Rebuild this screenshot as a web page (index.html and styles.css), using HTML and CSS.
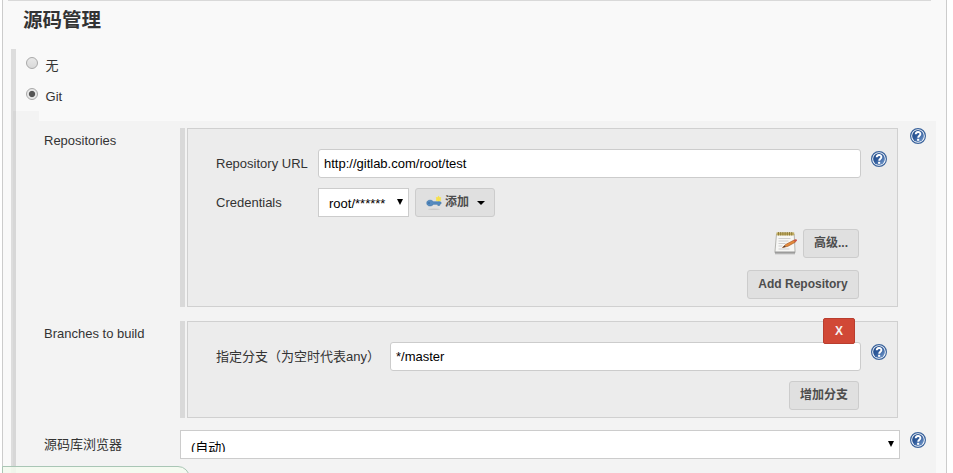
FILE: index.html
```html
<!DOCTYPE html>
<html lang="zh-CN">
<head>
<meta charset="utf-8">
<title>源码管理</title>
<link rel="stylesheet" href="styles.css">
</head>
<body>
<svg class="defs" width="0" height="0">
  <defs>
    <linearGradient id="blue" x1="0" y1="0" x2="1" y2="1"><stop offset="0" stop-color="#204a87"/><stop offset=".45" stop-color="#2f5a9a"/><stop offset="1" stop-color="#7ea3d3"/></linearGradient>
    <symbol id="help" viewBox="0 0 16 16">
      <circle cx="8" cy="8" r="7.4" fill="#fff" stroke="#3a639c" stroke-width="1.2"/>
      <circle cx="8" cy="8" r="5.9" fill="url(#blue)"/>
      <path d="M5.7 6.3C5.7 3.3 10.4 3.2 10.4 6C10.4 7.7 8.2 7.8 8.2 9.8" fill="none" stroke="#fff" stroke-width="1.9"/>
      <rect x="7.1" y="10.8" width="2.1" height="2" fill="#fff"/>
    </symbol>
  </defs>
</svg>
<main class="panel">
  <div class="rule"></div>
  <h1>源码管理</h1>
  <div class="scm">
    <div class="choice"><i class="radio"></i><span>无</span></div>
    <div class="choice git"><i class="radio on"></i><span>Git</span></div>
    <div class="tab"></div>
    <section class="nested">
      <div class="row">
        <div class="label">Repositories</div>
        <div class="handle"></div>
        <div class="box repo">
          <div class="field"><span class="name">Repository URL</span><div class="input">http://gitlab.com/root/test</div><svg class="help"><use href="#help"/></svg></div>
          <div class="field cred"><span class="name">Credentials</span>
            <div class="select short"><span>root/******</span><i class="arrow"></i></div>
            <div class="btn add">
              <svg class="key" viewBox="0 0 16 16"><ellipse cx="8" cy="14.3" rx="6" ry=".8" fill="#c9c9c9"/><circle cx="12.5" cy="4" r="2.5" fill="#f8e972"/><path d="M12.5 .6l.8 2 2-.4-.9 1.8.9 1.8-2-.4-.8 1.8-.8-1.8-2 .4.9-1.8-.9-1.8 2 .4z" fill="#f5df4e"/><path d="M4 5.2c1.8 0 2.8.7 3.2 1.6H14.4l.9 1.2-.9 1.2h-.8v1.2h-1.8V9.3H7.2C6.8 10.2 5.8 10.9 4 10.9 1.7 10.9.8 9.6.8 8S1.8 5.2 4 5.2z" fill="#568bc0" stroke="#3972a8" stroke-width=".6"/><circle cx="3" cy="8" r=".7" fill="#2b598b"/></svg>
              <span>添加</span><i class="caret"></i>
            </div>
          </div>
          <div class="actions adv">
            <svg class="note" viewBox="0 0 24 24"><path d="M1 22h20v1.3H1z" fill="#b4b4b4"/><path d="M2.5 3h17.7l.9 18.5H.9z" fill="#f7f7f5" stroke="#a4a4a0" stroke-width=".8"/><path d="M1 20.5h20v1.4H1z" fill="#999"/><path d="M2.5 1.4h17.7v3H2.5z" fill="#c3ae62"/><path d="M4.5 1v3.5M6.7 1v3.5M8.9 1v3.5M11.1 1v3.5M13.3 1v3.5M15.5 1v3.5M17.7 1v3.5" stroke="#806f30" stroke-width=".8"/><path d="M4.5 7.5h12M4.5 10h10M4.5 12.5h7M4.5 15h4M4.5 18h11" stroke="#cdcdcd"/><path d="M8.5 16.5l3.7-3.3 8-4.2 1.4 2-7.7 4.3z" fill="#e58b3a" stroke="#a75b29" stroke-width=".7"/><path d="M19.5 9.3l1.8-1c1.5-.3 2.1.8 1.5 1.6l-1.8 1.2z" fill="#cb5546"/><path d="M8.5 16.5l2.2-1.9 1 1.3z" fill="#4d4037"/></svg>
            <div class="btn advanced">高级...</div>
          </div>
          <div class="actions"><div class="btn addrepo">Add Repository</div></div>
        </div>
        <svg class="help outer"><use href="#help"/></svg>
      </div>
      <div class="row branches">
        <div class="label">Branches to build</div>
        <div class="handle"></div>
        <div class="box branch">
          <div class="delete">X</div>
          <div class="field"><span class="name long">指定分支（为空时代表any）</span><div class="input">*/master</div><svg class="help"><use href="#help"/></svg></div>
          <div class="actions"><div class="btn addbranch">增加分支</div></div>
        </div>
      </div>
      <div class="row browser">
        <div class="label">源码库浏览器</div>
        <div class="select wide"><span class="clipped">(自动)</span><i class="arrow"></i></div>
        <svg class="help outer"><use href="#help"/></svg>
      </div>
    </section>
  </div>
</main>
<div class="status"></div>
</body>
</html>
```
FILE: styles.css
```css
* { box-sizing: border-box; }
body { margin: 0; height: 473px; overflow: hidden; background: #fff; color: #333; font: 13px/18px "Liberation Sans", "Noto Sans CJK SC", sans-serif; }
.defs { position: absolute; }
.panel { width: 945px; height: 473px; margin-left: 2px; border: solid #ccc; border-width: 0 1px; background: #f9f9f9; overflow: hidden; }
.rule { height: 1px; margin: 0 15px 0 5px; background: #d9d9d9; }
h1 { margin: 4px 0 0 20px; height: 44px; font-size: 19.5px; line-height: 31px; font-weight: bold; }
.scm { margin-left: 8px; height: 424px; background: linear-gradient(#ddd, #ddd) 0 0 / 5px 100% no-repeat; }
.choice { display: flex; height: 31px; padding: 8px 0 0 15px; }
.choice span { margin-left: 7.6px; line-height: 18px; white-space: nowrap; }
.radio { width: 12px; height: 12px; border: 1px solid #a9a9a9; border-radius: 50%; background: linear-gradient(#e8e8e8, #d9d9d9); }
.radio.on { background: radial-gradient(circle, #555 0 2.7px, #e8e8e8 3.6px); }
.tab { width: 26px; height: 10px; margin-left: 2px; background: rgba(0, 0, 0, .025); }
.nested { width: 923px; height: 352px; margin-left: 2px; padding-top: 7px; background: rgba(0, 0, 0, .025); }
.row { display: flex; padding-left: 31px; }
.label { width: 136px; flex: none; padding-top: 4px; }
.handle { width: 5px; flex: none; background: #d9d9d9; }
.box { width: 711px; margin-left: 2px; border: 1px solid #d0d0d0; background: #ececec; }
.repo { height: 179px; padding-top: 20px; }
.help { width: 16px; height: 16px; flex: none; margin: 2px 0 0 10px; }
.outer { margin: 0 0 0 12px; }
.field { display: flex; padding-left: 28px; }
.name { width: 102px; flex: none; line-height: 29px; white-space: nowrap; }
.name.long { width: 174px; }
.input { flex: none; width: 543px; height: 29px; padding-left: 5px; border: 1px solid #ccc; border-radius: 3px; background: #fff; color: #000; line-height: 27px; }
.branch .input { width: 471px; }
.cred { margin-top: 10px; }
.select { position: relative; height: 29px; border: 1px solid #ccc; background: #fff; color: #000; }
.short { width: 91px; padding-left: 10px; line-height: 29px; }
.arrow { position: absolute; right: 5px; top: 10px; border: solid transparent; border-width: 6px 3px 0; border-top-color: #000; }
.btn { display: flex; justify-content: center; height: 29px; border: 1px solid #ccc; border-radius: 3px; background: #e0e0e0; color: #4d4d4d; font-size: 12px; line-height: 27px; font-weight: bold; white-space: nowrap; }
.add { width: 80px; margin-left: 6px; justify-content: flex-start; padding-left: 10px; }
.key { width: 16px; height: 16px; margin: 6px 3px 0 0; }
.caret { margin: 12px 0 0 8px; width: 0; height: 0; border: solid transparent; border-width: 4px 4px 0; border-top-color: #000; }
.actions { display: flex; justify-content: flex-end; padding-right: 38px; margin-top: 12px; }
.note { width: 24px; height: 24px; margin: 2px 5px 0 0; }
.advanced { width: 56px; }
.addrepo { width: 112px; }
.branches { margin-top: 14px; }
.branch { position: relative; height: 97px; padding-top: 20px; }
.branch .actions { margin-top: 10px; }
.addbranch { width: 70px; }
.delete { position: absolute; left: 635px; top: -4px; width: 32px; height: 26px; border: 1px solid #b93d2e; border-radius: 2px; background: #d14836; color: #f5f0f0; font-size: 12px; line-height: 25px; font-weight: bold; text-align: center; }
.browser { margin-top: 12px; }
.browser .label { padding-top: 6px; }
.wide { width: 720px; padding-left: 10px; }
.clipped { display: block; height: 21px; overflow: hidden; line-height: 34px; }
.browser .outer { margin: 2px 0 0 10px; }
.status { position: absolute; left: 2px; top: 466px; width: 188px; height: 20px; border: 1px solid #a9c6b5; border-radius: 0 12px 0 0; background: rgba(243, 250, 238, .85); }
```
